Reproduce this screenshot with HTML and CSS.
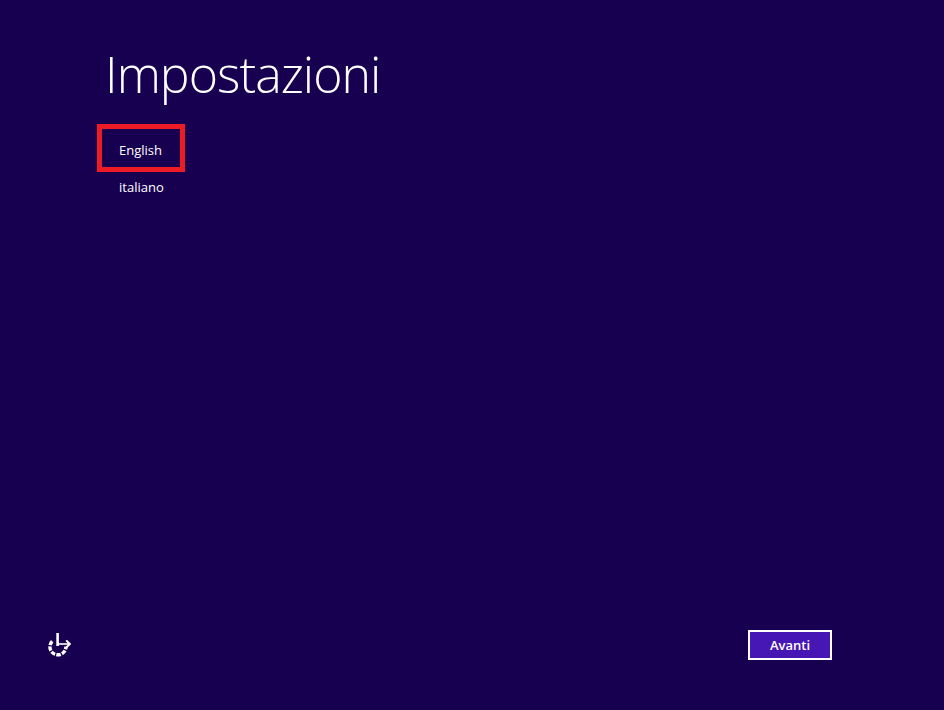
FILE: index.html
```html
<!DOCTYPE html>
<html lang="it">
<head>
  <meta charset="UTF-8" />
  <title>Impostazioni</title>
  <link rel="stylesheet" href="styles.css">
</head>
<body>
  <div class="screen">
    <main class="content">
      <h1 class="title">Impostazioni</h1>
      <ul class="lang-list">
        <li class="lang-item selected">English</li>
        <li class="lang-item">italiano</li>
      </ul>
    </main>

    <footer class="footer">
      <svg class="ease-icon" width="24" height="24" viewBox="0 0 24 24" fill="none" stroke="#fff">
        <path d="M5.2 8.2A8 8 0 1 0 18.9 13.5" stroke-width="3.4" stroke-dasharray="4.4 1.3" />
        <path d="M10.6 0v13" stroke-width="2.6" />
        <path d="M10.6 11H22.5" stroke-width="1.6" />
        <path d="M19.2 7.4l3.6 3.6-3.6 3.6" stroke-width="2" />
      </svg>
      <button class="next-btn">Avanti</button>
    </footer>
  </div>
</body>
</html>
```

FILE: styles.css
```css
* {
  box-sizing: border-box;
}

body {
  margin: 0;
  background: #180050;
  font-family: 'Open Sans', 'Liberation Sans', sans-serif;
  color: white;
}

.screen {
  height: 710px;
  display: flex;
  flex-direction: column;
  justify-content: space-between;
  overflow: hidden;
}

.content {
  padding: 40px 0 0 97px;
}

.title {
  margin: 0 0 0 8px;
  font-size: 50px;
  font-weight: 300;
  line-height: 68px;
  letter-spacing: -0.95px;
}

.lang-list {
  list-style: none;
  margin: 16px 0 0;
  padding: 0;
}

.lang-item {
  width: 88px;
  height: 29px;
  padding-left: 22px;
  font-size: 13px;
  line-height: 29px;
}

.lang-item.selected {
  height: 48px;
  line-height: 42px;
  padding-left: 17px;
  border: 5px solid #ed1c24;
  margin-bottom: 1px;
}

.footer {
  display: flex;
  justify-content: space-between;
  align-items: center;
  padding: 0 112px 50px 47px;
}

.next-btn {
  width: 84px;
  height: 30px;
  background: #4617b4;
  border: 2px solid white;
  color: white;
  font-family: 'Open Sans', 'Liberation Sans', sans-serif;
  font-size: 13px;
  font-weight: 600;
  padding: 0;
}
```
